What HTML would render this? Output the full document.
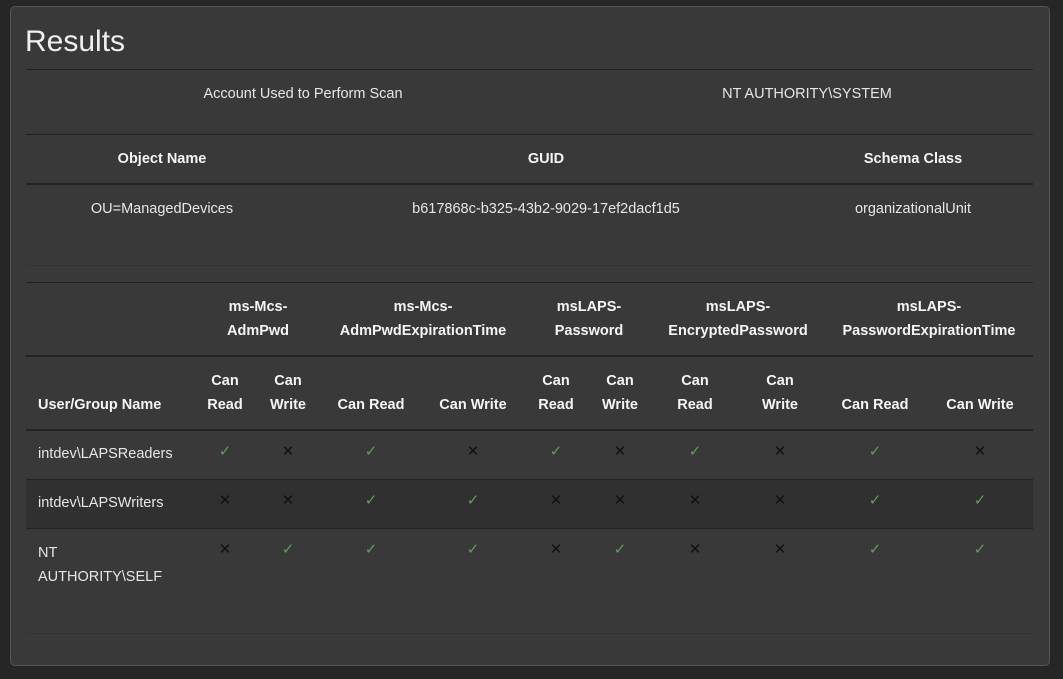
<!DOCTYPE html>
<html><head><meta charset="utf-8"><style>
*{margin:0;padding:0;box-sizing:border-box}
body{width:1063px;height:679px;background:#262626;font-family:"Liberation Sans",sans-serif;color:#e6e6e6;font-size:14.5px;position:relative;overflow:hidden}
.card{position:absolute;left:10px;top:6px;width:1040px;height:660px;background:#393939;border:1px solid #555;border-radius:5px}
.t{position:absolute;white-space:nowrap;transform:translateX(-50%);text-align:center}
.l{position:absolute;white-space:nowrap}
.b{font-weight:bold;color:#f5f5f5}
.hr{position:absolute;left:26px;width:1007px;height:1px;background:#222}
.hr2{height:2px;background:#232323}
.hrf{background:#333}
.ok{color:#5aa05a;font-size:15px}
.no{color:#111;font-size:15px}
</style></head><body>
<div class="card"></div>
<div class="l" style="left:25px;top:25px;font-size:30px;color:#f0f0f0">Results</div>
<div class="hr" style="top:69px"></div>
<div class="t" style="left:303px;top:86px">Account Used to Perform Scan</div>
<div class="t" style="left:807px;top:86px">NT AUTHORITY\SYSTEM</div>
<div class="hr" style="top:134px"></div>
<div class="t b" style="left:162px;top:151px">Object Name</div>
<div class="t b" style="left:546px;top:151px">GUID</div>
<div class="t b" style="left:913px;top:151px">Schema Class</div>
<div class="hr hr2" style="top:183px"></div>
<div class="t" style="left:162px;top:201px">OU=ManagedDevices</div>
<div class="t" style="left:546px;top:201px">b617868c-b325-43b2-9029-17ef2dacf1d5</div>
<div class="t" style="left:913px;top:201px">organizationalUnit</div>
<div class="hr hrf" style="top:265px"></div>
<div class="hr" style="top:282px"></div>
<div class="t b" style="left:258px;top:295px;line-height:24px">ms-Mcs-<br>AdmPwd</div>
<div class="t b" style="left:423px;top:295px;line-height:24px">ms-Mcs-<br>AdmPwdExpirationTime</div>
<div class="t b" style="left:589px;top:295px;line-height:24px">msLAPS-<br>Password</div>
<div class="t b" style="left:738px;top:295px;line-height:24px">msLAPS-<br>EncryptedPassword</div>
<div class="t b" style="left:929px;top:295px;line-height:24px">msLAPS-<br>PasswordExpirationTime</div>
<div class="hr hr2" style="top:355px"></div>
<div class="l b" style="left:38px;top:397px">User/Group Name</div>
<div class="t b" style="left:225px;top:369px;line-height:24px">Can<br>Read</div>
<div class="t b" style="left:288px;top:369px;line-height:24px">Can<br>Write</div>
<div class="t b" style="left:371px;top:397px">Can Read</div>
<div class="t b" style="left:473px;top:397px">Can Write</div>
<div class="t b" style="left:556px;top:369px;line-height:24px">Can<br>Read</div>
<div class="t b" style="left:620px;top:369px;line-height:24px">Can<br>Write</div>
<div class="t b" style="left:695px;top:369px;line-height:24px">Can<br>Read</div>
<div class="t b" style="left:780px;top:369px;line-height:24px">Can<br>Write</div>
<div class="t b" style="left:875px;top:397px">Can Read</div>
<div class="t b" style="left:980px;top:397px">Can Write</div>
<div class="hr hr2" style="top:429px"></div>
<div style="position:absolute;left:26px;top:480px;width:1007px;height:48px;background:#303030"></div>
<div class="hr" style="top:479px"></div>
<div class="hr" style="top:528px"></div>
<div class="hr hrf" style="top:633px"></div>
<div class="l" style="left:38px;top:446px">intdev\LAPSReaders</div>
<div class="l" style="left:38px;top:495px">intdev\LAPSWriters</div>
<div class="l" style="left:38px;top:541px;line-height:24px">NT<br>AUTHORITY\SELF</div>
<div id="marks"></div>
<script>
var xs=[225,288,371,473,556,620,695,780,875,980];
var rows=[[442,"1010101010"],[491,"0011000011"],[540,"0111010011"]];
var h="";
rows.forEach(function(r){for(var i=0;i<10;i++){var ok=r[1][i]=="1";h+='<div class="t '+(ok?'ok':'no')+'" style="left:'+xs[i]+'px;top:'+r[0]+'px">'+(ok?'✓':'✕')+'</div>';}});
document.getElementById("marks").innerHTML=h;
</script>
</body></html>
